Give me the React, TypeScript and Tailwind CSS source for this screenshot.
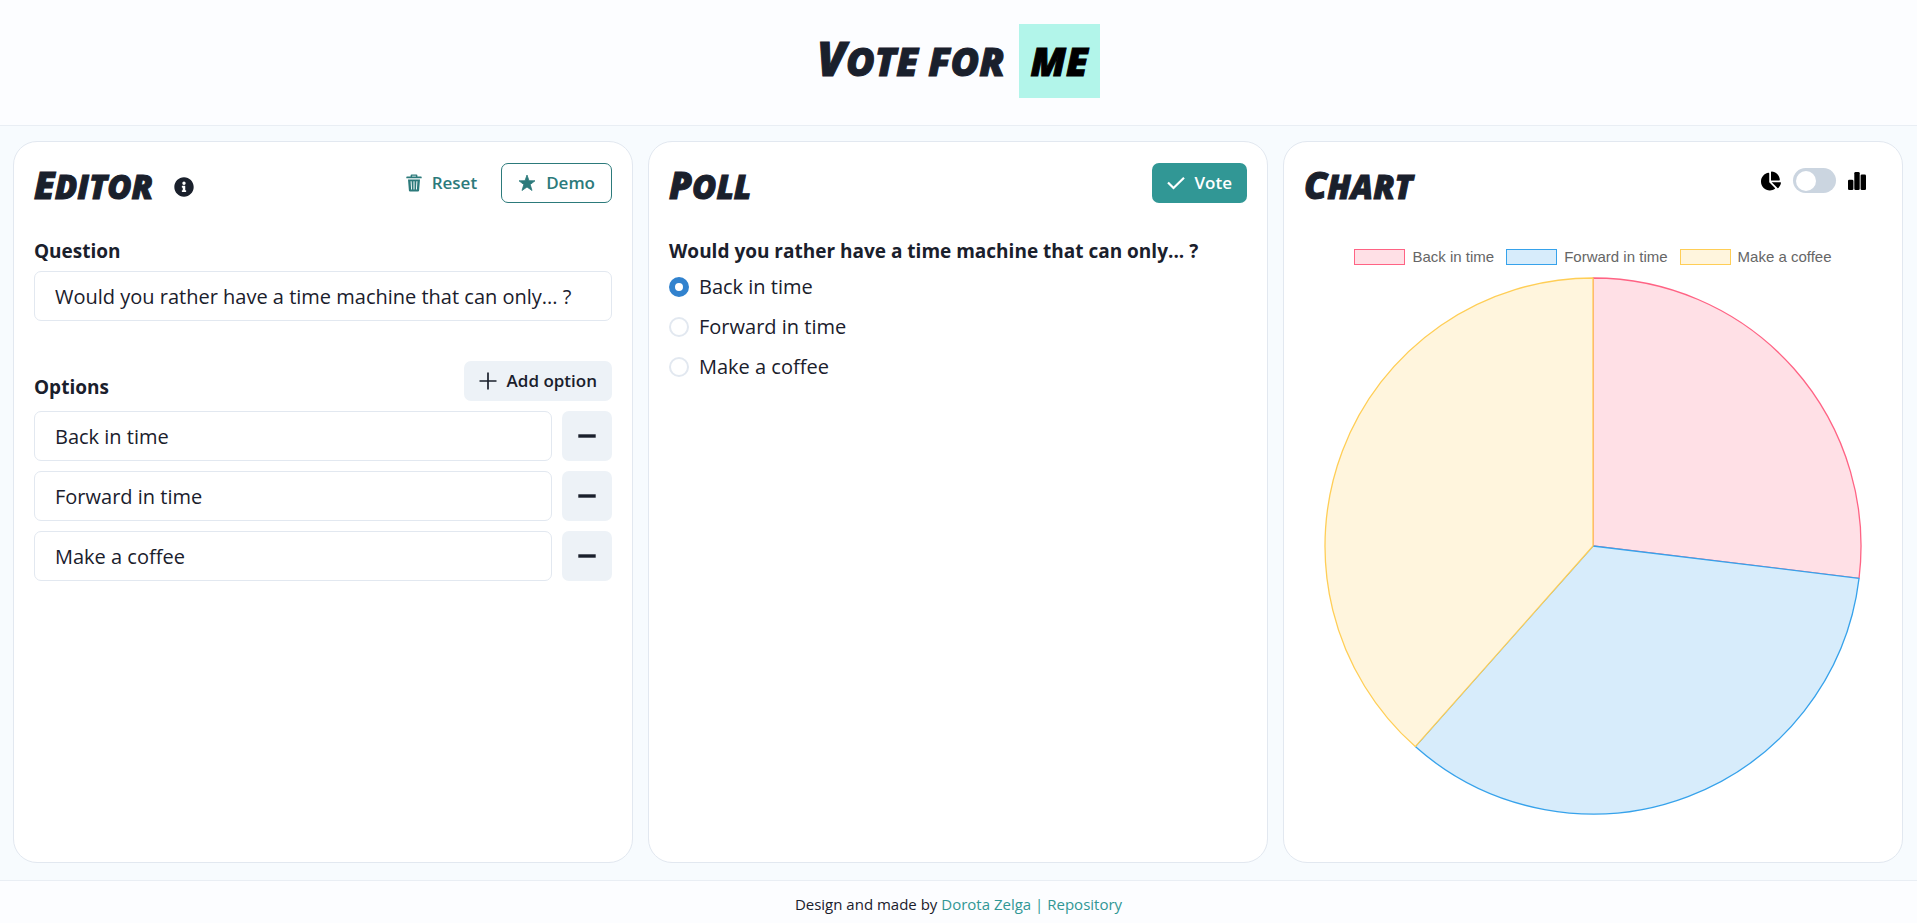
import { useState } from "react";
import type { ReactNode } from "react";
import { FaInfoCircle, FaChartPie } from "react-icons/fa";

const OPTIONS = ["Back in time", "Forward in time", "Make a coffee"];

const SLICES = [
  { label: "Back in time", votes: 7, fill: "#ffe0e6", stroke: "#ff6384" },
  { label: "Forward in time", votes: 9, fill: "#d7ecfb", stroke: "#36a2eb" },
  { label: "Make a coffee", votes: 10, fill: "#fff5dd", stroke: "#ffce56" },
];

function TrashIcon() {
  return (
    <svg viewBox="0 0 16 18" className="h-[18px] w-4" fill="currentColor" aria-hidden="true">
      <path d="M4.6 2.6V1.4Q4.6.4 5.6.4h4.8q1 0 1 1v1.2h3.6q.7 0 .7.7v1H.3v-1q0-.7.7-.7zm1.5 0h3.8V1.8H6.100z" />
      <path
        fillRule="evenodd"
        d="M2 5.600h12l-.9 10.900q-.1 1-1.100 1H4q-1 0-1.100-1zM4.600 7.300l.5 8.200h.9l-.4-8.200zM7.500 7.300v8.200h1V7.300zM10.400 7.300l-.4 8.200h.9l.5-8.200z"
      />
    </svg>
  );
}

function StarIcon() {
  return (
    <svg viewBox="0 0 18 18" className="size-[18px]" fill="currentColor" aria-hidden="true">
      <path
        d="M9 1l2 5.700 6 .1-4.800 3.700 1.800 6L9 13l-5 3.500 1.800-6L1 6.800l6-.1z"
        stroke="currentColor"
        strokeWidth="0.800"
        strokeLinejoin="round"
      />
    </svg>
  );
}

function PlusIcon() {
  return (
    <svg viewBox="0 0 18 18" className="size-[18px]" fill="none" stroke="currentColor" aria-hidden="true">
      <path d="M9 .5v17M.5 9h17" strokeWidth="1.700" />
    </svg>
  );
}

function CheckIcon() {
  return (
    <svg viewBox="0 0 18 18" className="size-[18px]" fill="none" stroke="currentColor" aria-hidden="true">
      <path d="M1 8.500l5.500 5.500L17 3.700" strokeWidth="2.200" />
    </svg>
  );
}

function MinusIcon() {
  return (
    <svg viewBox="0 0 18 4" className="h-1 w-[18px]" fill="currentColor" aria-hidden="true">
      <rect x="0.300" y="0.300" width="17.400" height="3.400" />
    </svg>
  );
}

function BarsIcon() {
  return (
    <svg viewBox="0 0 18 18" className="size-[18px]" fill="currentColor" aria-hidden="true">
      <rect x="0" y="7.700" width="5.400" height="10.300" rx="1.300" />
      <rect x="6.300" y="0" width="5.400" height="18" rx="1.300" />
      <rect x="12.600" y="2.400" width="5.400" height="15.600" rx="1.300" />
    </svg>
  );
}

function Heading({ children }: { children: ReactNode }) {
  return (
    <h2 className="pt-1 text-[33px] leading-10 font-extrabold uppercase italic [-webkit-text-stroke:1px_#1a202c] first-letter:text-[37px] first-letter:leading-[0px]">
      {children}
    </h2>
  );
}

function Panel({ children }: { children: ReactNode }) {
  return (
    <section className="flex min-w-0 flex-col rounded-3xl border border-[#e2e8f0] bg-white px-5 pt-[21px] pb-5">
      {children}
    </section>
  );
}

function PieChart() {
  const total = SLICES.reduce((sum, s) => sum + s.votes, 0);
  const c = 270;
  const r = 268;
  const point = (share: number) => {
    const a = share * 2 * Math.PI;
    return `${(c + r * Math.sin(a)).toFixed(2)} ${(c - r * Math.cos(a)).toFixed(2)}`;
  };
  let start = 0;
  return (
    <svg viewBox="0 0 540 540" className="mx-auto w-full max-w-[540px]" role="img" aria-label="Votes">
      {SLICES.map((s) => {
        const from = start / total;
        start += s.votes;
        const to = start / total;
        return (
          <path
            key={s.label}
            d={`M${c} ${c}L${point(from)}A${r} ${r} 0 0 1 ${point(to)}Z`}
            fill={s.fill}
            stroke={s.stroke}
            strokeWidth="1.3"
            strokeLinejoin="bevel"
          />
        );
      })}
    </svg>
  );
}

export default function App() {
  const [choice, setChoice] = useState(0);
  return (
    <div className="flex min-h-screen flex-col bg-[#f7fafc] font-['Open_Sans','Noto_Sans',sans-serif] text-xl text-[#1a202c]">
      <header className="flex justify-center border-b border-[#e9eef4] bg-[#fcfdff] pt-6 pb-[27px]">
        <h1 className="flex text-[39px] leading-[74px] font-extrabold uppercase italic [-webkit-text-stroke:1px]">
          <span className="block pr-[14px] first-letter:text-[47px] first-letter:leading-[0px]">Vote for</span>
          <mark className="bg-[#b2f5ea] px-3 text-black">me</mark>
        </h1>
      </header>

      <main className="grid flex-1 grid-cols-1 gap-[15px] bg-[#f7fbfe] pt-[15px] pr-[14px] pb-[17px] pl-[13px] lg:grid-cols-3">
        <Panel>
          <div className="flex items-start">
            <Heading>Editor</Heading>
            <FaInfoCircle className="mt-[14px] ml-[21px] size-5" />
            <button className="ml-auto flex h-10 items-center gap-2.5 px-4 text-[17px] font-semibold text-[#2c7a7b]">
              <TrashIcon />
              Reset
            </button>
            <button className="ml-2 flex h-10 items-center gap-2.5 rounded-[7px] border border-[#2c7a7b] px-4 text-[17px] font-semibold text-[#2c7a7b]">
              <StarIcon />
              Demo
            </button>
          </div>
          <label htmlFor="question" className="mt-7 text-[19px] leading-8 font-bold">
            Question
          </label>
          <input
            id="question"
            defaultValue="Would you rather have a time machine that can only... ?"
            className="mt-1 h-[50px] w-full rounded-[7px] border border-[#e2e8f0] px-5"
          />
          <div className="mt-10 flex items-start justify-between">
            <h3 className="pt-3 text-[19px] leading-7 font-bold">Options</h3>
            <button className="flex h-10 items-center gap-2.5 rounded-[7px] bg-[#edf2f7] px-[15px] text-[17px] font-semibold">
              <PlusIcon />
              Add option
            </button>
          </div>
          <ul className="mt-2.5 flex flex-col gap-2.5">
            {OPTIONS.map((o) => (
              <li key={o} className="flex gap-2.5">
                <input
                  aria-label="Option"
                  defaultValue={o}
                  className="h-[50px] min-w-0 flex-1 rounded-[7px] border border-[#e2e8f0] px-5"
                />
                <button
                  aria-label="Remove option"
                  className="flex size-[50px] items-center justify-center rounded-[7px] bg-[#edf2f7]"
                >
                  <MinusIcon />
                </button>
              </li>
            ))}
          </ul>
        </Panel>

        <Panel>
          <div className="flex items-start justify-between">
            <Heading>Poll</Heading>
            <button className="flex h-10 items-center gap-2.5 rounded-[7px] bg-[#319795] px-[15px] text-[17px] font-semibold text-white">
              <CheckIcon />
              Vote
            </button>
          </div>
          <fieldset className="mt-7 flex flex-col">
            <legend className="text-[19px] leading-8 font-bold">
              Would you rather have a time machine that can only... ?
            </legend>
            <div className="flex flex-col gap-2 pt-1">
              {OPTIONS.map((o, i) => (
                <label key={o} className="flex items-center gap-2.5 leading-8">
                  <input
                    type="radio"
                    name="poll"
                    checked={choice === i}
                    onChange={() => setChoice(i)}
                    className="size-5 appearance-none rounded-full border-2 border-[#e2e8f0] bg-white checked:border-[6px] checked:border-[#3182ce]"
                  />
                  {o}
                </label>
              ))}
            </div>
          </fieldset>
        </Panel>

        <Panel>
          <div className="flex items-start justify-between">
            <Heading>Chart</Heading>
            <div className="mt-[5px] mr-4 flex items-center gap-3 text-black">
              <FaChartPie className="size-5" />
              <label className="flex h-[25px] w-[43px] items-center rounded-full bg-[#cbd5e0] p-[3px]">
                <input type="checkbox" aria-label="Bar chart" className="peer sr-only" />
                <span className="size-5 rounded-full bg-white peer-checked:translate-x-[17px]" />
              </label>
              <BarsIcon />
            </div>
          </div>
          <ul className="mt-[38px] flex items-center justify-center gap-3 font-['Liberation_Sans',Arial,sans-serif] text-[15px] leading-6 text-[#666666]">
            {SLICES.map((s) => (
              <li key={s.label} className="flex items-center gap-[7px]">
                <span
                  className="h-4 w-[51px] border"
                  style={{ backgroundColor: s.fill, borderColor: s.stroke }}
                />
                {s.label}
              </li>
            ))}
          </ul>
          <div className="mt-[7px]">
            <PieChart />
          </div>
        </Panel>
      </main>

      <footer className="border-t border-[#e9eef4] bg-[#fcfdff] pt-[11px] pb-[7px] text-center text-[15px] leading-6">
        Design and made by{" "}
        <a href="#author" className="text-[#319795]">Dorota Zelga</a>{" "}
        <span className="text-[#319795]">|</span>{" "}
        <a href="#repository" className="text-[#319795]">Repository</a>
      </footer>
    </div>
  );
}
